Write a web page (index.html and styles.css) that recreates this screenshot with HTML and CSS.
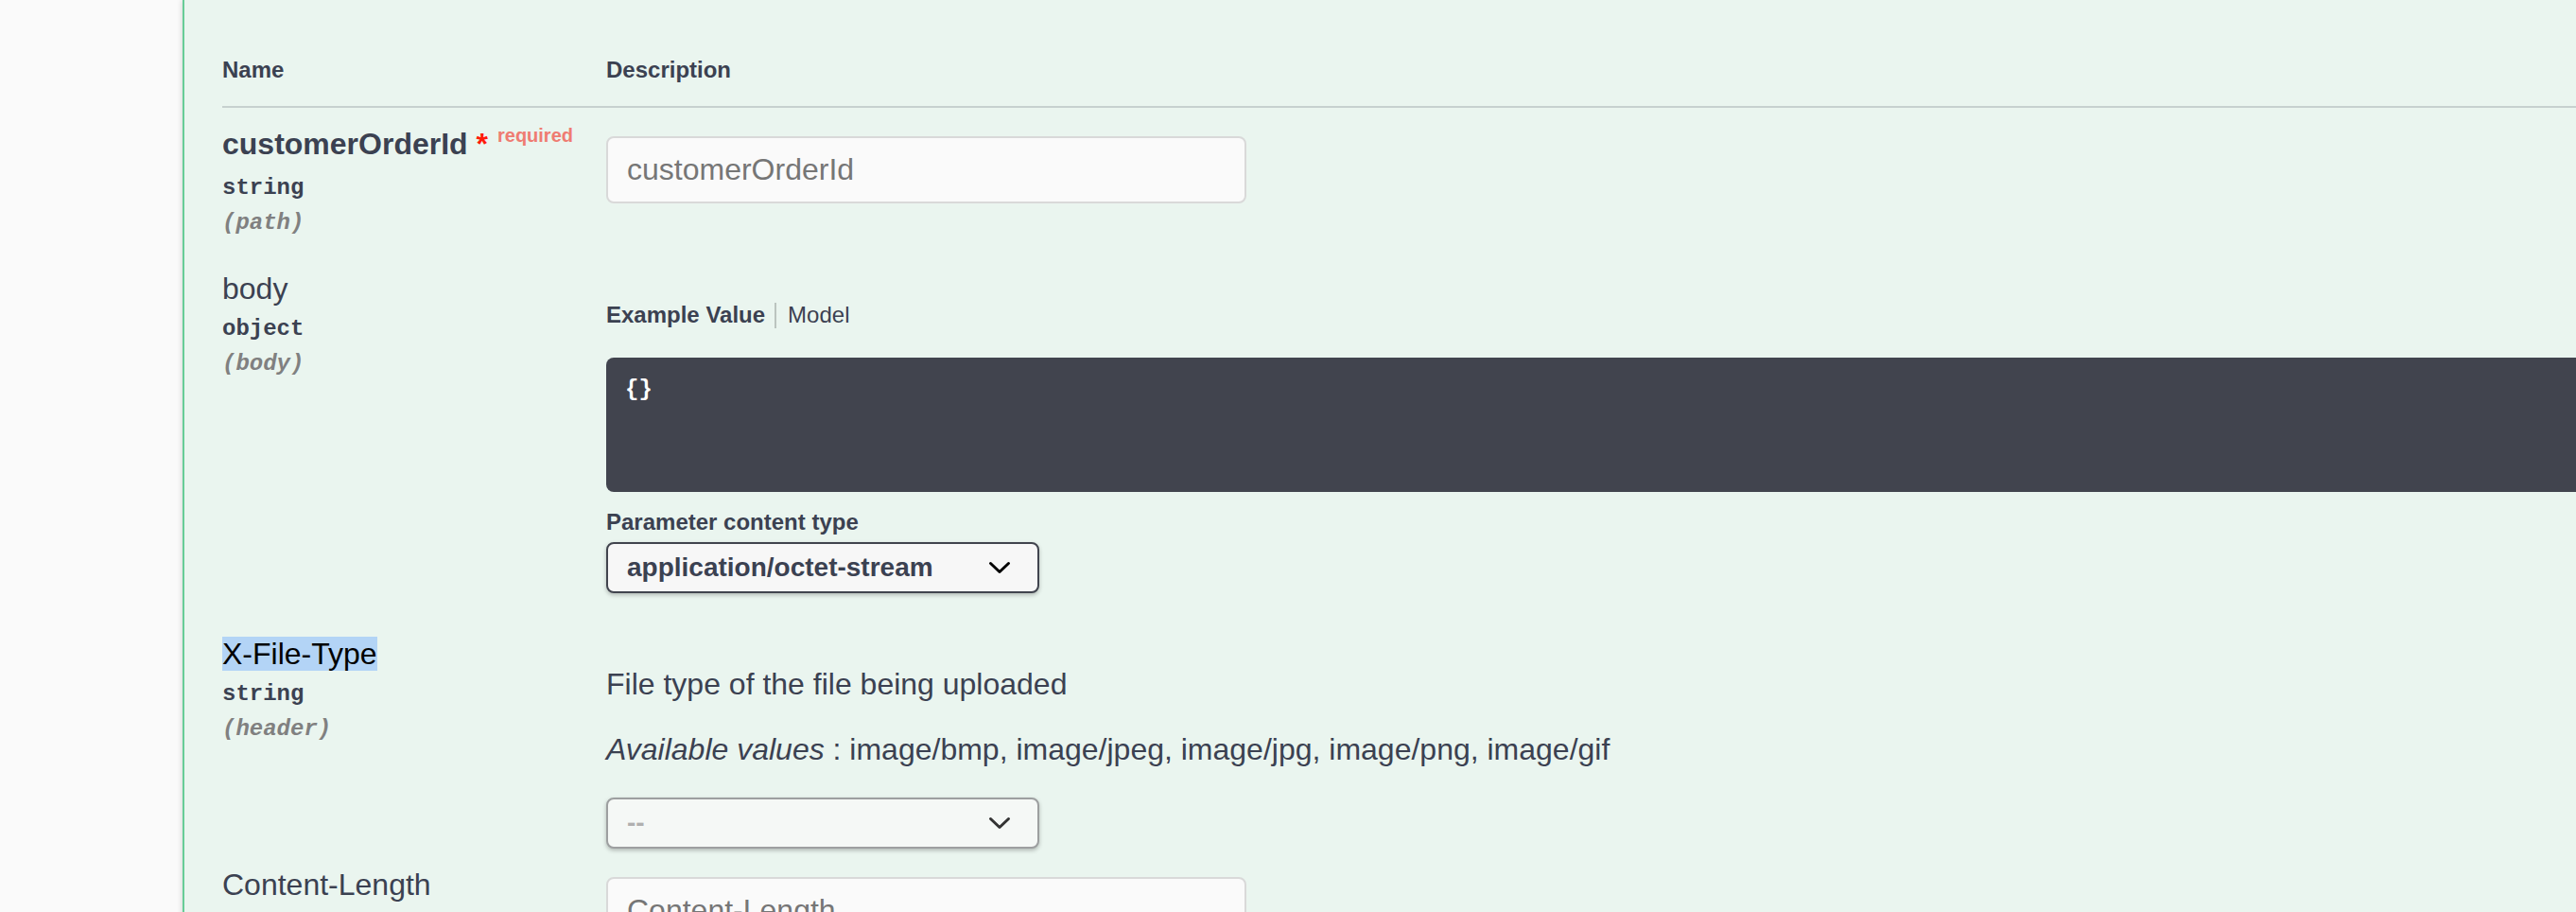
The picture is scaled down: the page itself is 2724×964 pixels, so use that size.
FILE: index.html
```html
<!DOCTYPE html>
<html lang="en">
<head>
<meta charset="utf-8">
<title>Parameters</title>
<link rel="stylesheet" href="styles.css">
</head>
<body>
<div class="page">
  <div class="gutter"></div>
  <div class="opblock">
    <div class="params">
      <div class="row head">
        <div class="col-name">Name</div>
        <div class="col-desc">Description</div>
      </div>

      <div class="row param">
        <div class="col-name">
          <div class="p-name required">customerOrderId<span class="star">&nbsp;*</span><span class="req">required</span></div>
          <div class="p-type">string</div>
          <div class="p-in">(path)</div>
        </div>
        <div class="col-desc">
          <input class="text-input" type="text" placeholder="customerOrderId">
        </div>
      </div>

      <div class="row param">
        <div class="col-name">
          <div class="p-name">body</div>
          <div class="p-type">object</div>
          <div class="p-in">(body)</div>
        </div>
        <div class="col-desc">
          <ul class="tabs">
            <li class="tab active">Example Value</li>
            <li class="tab">Model</li>
          </ul>
          <pre class="code">{}</pre>
          <div class="ct-label">Parameter content type</div>
          <div class="select ct-select">
            <span>application/octet-stream</span>
            <svg viewBox="0 0 40 40" aria-hidden="true"><path d="M10.5 15.5 L20 24.5 L29.5 15.5" fill="none" stroke="#000" stroke-width="3" stroke-linecap="round" stroke-linejoin="round"/></svg>
          </div>
        </div>
      </div>

      <div class="row param">
        <div class="col-name">
          <div class="p-name"><span class="sel">X-File-Type</span></div>
          <div class="p-type">string</div>
          <div class="p-in">(header)</div>
        </div>
        <div class="col-desc">
          <div class="md">
            <p>File type of the file being uploaded</p>
            <p><i>Available values</i> : image/bmp, image/jpeg, image/jpg, image/png, image/gif</p>
          </div>
          <div class="select empty">
            <span>--</span>
            <svg viewBox="0 0 40 40" aria-hidden="true"><path d="M10.5 15.5 L20 24.5 L29.5 15.5" fill="none" stroke="#333" stroke-width="3" stroke-linecap="round" stroke-linejoin="round"/></svg>
          </div>
        </div>
      </div>

      <div class="row param">
        <div class="col-name">
          <div class="p-name">Content-Length</div>
          <div class="p-type">integer</div>
          <div class="p-in">(header)</div>
        </div>
        <div class="col-desc">
          <input class="text-input" type="text" placeholder="Content-Length">
        </div>
      </div>
    </div>
  </div>
</div>
</body>
</html>
```

FILE: styles.css
```css
html, body {
  margin: 0;
  padding: 0;
}

body {
  background: #fafafa;
  font-family: "Liberation Sans", Arial, sans-serif;
  color: #3b4151;
  overflow: hidden;
  width: 2724px;
  height: 964px;
}

.page {
  display: flex;
  width: 3200px;
  min-height: 1100px;
}

.gutter {
  flex: 0 0 193px;
}

.opblock {
  flex: 1;
  background: #eaf5ef;
  border-left: 2px solid #68cc97;
  box-shadow: 0 0 6px rgba(0, 0, 0, 0.19);
  padding: 36px 40px 0;
}

.row {
  display: grid;
  grid-template-columns: 406px 1fr;
}

.head {
  border-bottom: 2px solid rgba(59, 65, 81, 0.2);
  font-size: 24px;
  font-weight: 700;
  line-height: 28px;
  padding: 24px 0;
}

.param {
  padding-top: 20px;
}

.col-desc {
  min-width: 0;
}

.p-name {
  font-size: 32px;
  line-height: 37px;
  white-space: nowrap;
}

.p-name.required {
  font-weight: 700;
}

.star {
  color: #ff1a0a;
}

.req {
  font-size: 20px;
  color: #ef7c72;
  position: relative;
  top: -13px;
  padding: 0 10px;
}

.sel {
  background: #b3d4f6;
  color: #000;
}

.p-type {
  font-family: "Liberation Mono", "Courier New", monospace;
  font-size: 24px;
  font-weight: 700;
  line-height: 27px;
  padding: 10px 0;
}

.p-in {
  font-family: "Liberation Mono", "Courier New", monospace;
  font-size: 24px;
  font-weight: 700;
  font-style: italic;
  color: #808080;
  line-height: 27px;
  margin-bottom: 18px;
}

.text-input {
  display: block;
  box-sizing: border-box;
  width: 677px;
  height: 71px;
  margin: 10px 0;
  padding: 0 20px;
  border: 2px solid #d9d9d9;
  border-radius: 8px;
  background: #fafafa;
  font-family: "Liberation Sans", Arial, sans-serif;
  font-size: 32px;
  color: #3b4151;
  outline: none;
}

.text-input::placeholder {
  color: #767676;
}

.tabs {
  display: flex;
  list-style: none;
  margin: 32px 0 0;
  padding: 0;
  font-size: 24px;
  line-height: 28px;
}

.tab.active {
  font-weight: 700;
  padding-right: 24px;
  position: relative;
}

.tab.active::after {
  content: "";
  position: absolute;
  right: 12px;
  top: 1px;
  bottom: 0;
  width: 2px;
  background: rgba(0, 0, 0, 0.2);
}

.code {
  margin: 31px 0 0;
  height: 142px;
  box-sizing: border-box;
  background: #41444e;
  border-radius: 8px;
  padding: 20px;
  color: #fff;
  font-family: "Liberation Mono", "Courier New", monospace;
  font-size: 24px;
  font-weight: 700;
  line-height: 28px;
}

.ct-label {
  margin-top: 18px;
  font-size: 24px;
  font-weight: 700;
  line-height: 28px;
}

.select {
  display: flex;
  align-items: center;
  box-sizing: border-box;
  width: 458px;
  height: 54px;
  border: 2px solid #41444e;
  border-radius: 8px;
  background: #f7f7f7;
  box-shadow: 0 2px 4px rgba(0, 0, 0, 0.25);
  padding: 0 20px;
  font-size: 28px;
  font-weight: 700;
  line-height: 32px;
}

.select svg {
  margin-left: auto;
  width: 40px;
  height: 40px;
  flex: none;
}

.ct-select {
  margin-top: 7px;
  margin-bottom: 26px;
}

.select.empty {
  border-color: #9d9fa0;
  background: #f5f8f6;
  color: #b0b0b0;
}

.md p {
  margin: 32px 0;
  font-size: 32px;
  line-height: 37px;
}
```
